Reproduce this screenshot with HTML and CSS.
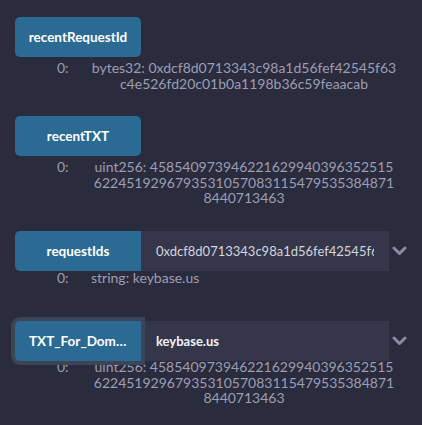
FILE: index.html
```html
<!DOCTYPE html>
<html lang="en">
<head>
    <meta charset="UTF-8">
    <meta name="viewport" content="width=device-width, initial-scale=1.0">
    <title>Deployed contract</title>
    <link rel="stylesheet" href="styles.css">
</head>
<body>
    <div class="contract">
        <div class="fn fn-first">
            <div class="fn-head">
                <a class="button" href="javascript:void(0)">recentRequestId</a>
            </div>
            <div class="result">
                <span class="index">0:</span>
                <span class="value">bytes32: 0xdcf8d0713343c98a1d56fef42545f63 c4e526fd20c01b0a1198b36c59feaacab</span>
            </div>
        </div>

        <div class="fn">
            <div class="fn-head">
                <a class="button" href="javascript:void(0)">recentTXT</a>
            </div>
            <div class="result">
                <span class="index">0:</span>
                <span class="value">uint256: 458540973946221629940396352515 6224519296793531057083115479535384871 8440713463</span>
            </div>
        </div>

        <div class="fn">
            <div class="fn-head">
                <a class="button" href="javascript:void(0)">requestIds</a>
                <input class="arg" type="text" value="0xdcf8d0713343c98a1d56fef42545f63c4e526fd20c01b0a1198b36c59feaacab">
                <span class="chevron">
                    <svg width="15" height="10" viewBox="0 0 15 10"><path d="M2 2 L7.5 7.5 L13 2" fill="none" stroke="currentColor" stroke-width="3" stroke-linecap="round" stroke-linejoin="round"/></svg>
                </span>
            </div>
            <div class="result result-input">
                <span class="index">0:</span>
                <span class="value value-left">string: keybase.us</span>
            </div>
        </div>

        <div class="fn fn-focus">
            <div class="fn-head">
                <a class="button focused" href="javascript:void(0)">TXT_For_Domain</a>
                <input class="arg arg-filled" type="text" value="keybase.us">
                <span class="chevron">
                    <svg width="15" height="10" viewBox="0 0 15 10"><path d="M2 2 L7.5 7.5 L13 2" fill="none" stroke="currentColor" stroke-width="3" stroke-linecap="round" stroke-linejoin="round"/></svg>
                </span>
            </div>
            <div class="result result-focus">
                <span class="index">0:</span>
                <span class="value">uint256: 458540973946221629940396352515 6224519296793531057083115479535384871 8440713463</span>
            </div>
        </div>
    </div>
</body>
</html>
```

FILE: styles.css
```css
html {
    box-sizing: border-box;
}
*, *::before, *::after {
    box-sizing: inherit;
}
body {
    margin : 0;
    padding: 0;
    overflow: hidden;

    background-color: #2a2b3d;
    font-family: Lato, "Noto Sans", sans-serif;
}
.contract {
    display: flex;
    flex-direction: column;
    padding: 17px 0 0 15px;
}
.fn {
    display: flex;
    flex-direction: column;
    margin-top: 25px;
}
.fn-first {
    margin-top: 0;
}
.fn-focus {
    margin-top: 36px;
}
.fn-head {
    display: flex;
    align-items: center;
    height: 40px;
}
.button {
    display: block;
    flex: 0 0 126px;
    width : 126px;
    height: 40px;
    padding: 0 8px;

    color: #fff;
    background-color: #2b6a92;
    border-radius: 5px;

    font-size  : 13.5px;
    font-weight: 700;
    line-height: 40px;
    text-align : center;
    text-decoration: none;

    white-space  : nowrap;
    overflow     : hidden;
    text-overflow: ellipsis;
}
.fn-head .button:not(:last-child) {
    border-top-right-radius   : 0;
    border-bottom-right-radius: 0;
}
.button.focused {
    position: relative;
    padding: 0 14px;
    border-radius: 5px;
    box-shadow: 0 0 0 4px #3b4558;
}
.arg {
    width : 248px;
    height: 40px;
    padding: 0 15px;
    border : none;
    outline: none;

    color: #d4d5de;
    background-color: #35364a;

    font-family: Lato, "Noto Sans", sans-serif;
    font-size  : 13px;
}
.arg-filled {
    color: #f2f2f6;
    font-weight: 700;
}
.chevron {
    display: flex;
    align-items: center;
    justify-content: center;
    width: 20px;
    color: #8a8ca2;
}
.result {
    display: flex;
    align-items: flex-start;
    margin-top: 3px;

    color: #9c9eb3;
    font-size  : 14px;
    line-height: 15.5px;
}
.result-input {
    margin-top: -1px;
}
.result-focus {
    margin-top: -2px;
}
.index {
    width: 42px;
    padding-left: 42px;
    box-sizing: content-box;
}
.value {
    width: 312px;
    margin-left: -11px;
    text-align: center;
}
.value-left {
    text-align: left;
    padding-left: 3px;
}
```
